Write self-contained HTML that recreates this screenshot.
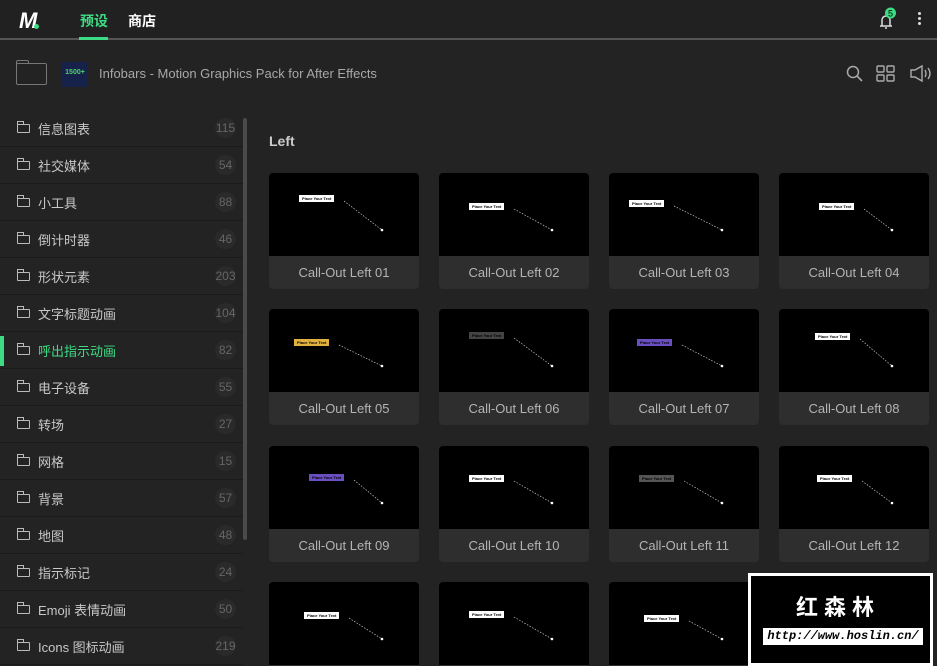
<!DOCTYPE html>
<html><head><meta charset="utf-8"><style>
*{margin:0;padding:0;box-sizing:border-box}
html,body{width:937px;height:666px;overflow:hidden}
body{background:#232323;font-family:"Liberation Sans","Noto Sans CJK SC",sans-serif;position:relative;color:#bbb}
.abs{position:absolute}
.top{left:0;top:0;width:937px;height:38px;background:#212121}
.line{left:0;top:38px;width:937px;height:2px;background:#555}
.hdr{left:0;top:40px;width:937px;height:69px;background:#232323}
.sb{left:0;top:110px;width:250px;height:556px;background:#232323}
.item{position:absolute;left:0;width:243px;height:37px;border-bottom:1px solid #1b1b1b;font-size:13px;color:#c8c8c8}
.item .t{position:absolute;left:38px;top:9px}
.item .f{position:absolute;left:17px;top:14px;width:13px;height:9px;border:1.5px solid #bbb;border-radius:1px}
.item .f:before{content:"";position:absolute;left:-1.5px;top:-4px;width:5px;height:3px;border:1.5px solid #bbb;border-bottom:none}
.item .n{position:absolute;right:7px;top:8px;min-width:21px;height:20px;border-radius:10px;background:#2a2a2a;color:#666;font-size:12px;text-align:center;line-height:20px}
.card{position:absolute;width:150px;height:116px;border-radius:4px;overflow:hidden;background:#2e2e2e}
.card .th{position:absolute;left:0;top:0;width:150px;height:83px;background:#000}
.card .cap{position:absolute;left:0;top:83px;width:150px;height:33px;text-align:center;line-height:33px;font-size:13px;color:#b4b4b4}
.lab{position:absolute;background:#fff;color:#000;font-size:4px;line-height:7px;height:7px;padding:0 3px;font-weight:bold}
</style></head><body>
<div class="abs top"></div>
<div class="abs line"></div>
<div class="abs" style="left:79px;top:37px;width:29px;height:3px;background:#3ddc84"></div>
<div class="abs" style="left:19px;top:8px;font:bold 22px 'Liberation Sans';color:#fff;font-style:italic">M</div>
<div class="abs" style="left:34px;top:24px;width:5px;height:5px;border-radius:50%;background:#3ddc84"></div>
<div class="abs" style="left:80px;top:11px;font-size:14px;font-weight:bold;color:#3ddc84">预设</div>
<div class="abs" style="left:128px;top:11px;font-size:14px;font-weight:bold;color:#fff">商店</div>
<svg class="abs" style="left:876px;top:7px" width="22" height="22"><path d="M4 19h12M6 19v-6a4 4 0 0 1 8 0v6M9 21h2" stroke="#ddd" stroke-width="1.5" fill="none"/><circle cx="14.5" cy="6" r="5.5" fill="#3ddc84"/><text x="14.5" y="9.5" font-size="9" fill="#000" text-anchor="middle" font-family="Liberation Sans">5</text></svg>
<div class="abs" style="left:918px;top:12px;width:3px;height:3px;background:#ddd;box-shadow:0 5px #ddd,0 10px #ddd;border-radius:50%"></div>
<div class="abs hdr"></div>
<div class="abs" style="left:16px;top:63px;width:31px;height:22px;border:1.5px solid #777;border-radius:2px"></div>
<div class="abs" style="left:16px;top:60px;width:13px;height:4px;border:1.5px solid #777;border-bottom:none;border-radius:2px 2px 0 0"></div>
<div class="abs" style="left:62px;top:62px;width:26px;height:25px;background:#16224a;color:#4fd36b;font-size:7px;font-weight:bold;text-align:center;line-height:22px">1500+</div>
<div class="abs" style="left:99px;top:66px;font-size:13px;color:#a8a8a8">Infobars - Motion Graphics Pack for After Effects</div>
<svg class="abs" style="left:845px;top:64px" width="90" height="20"><circle cx="8" cy="8" r="5.5" stroke="#aaa" stroke-width="1.5" fill="none"/><path d="M12 12l5 5" stroke="#aaa" stroke-width="1.6"/><rect x="32" y="2" width="7" height="6" rx="1" stroke="#aaa" fill="none" stroke-width="1.4"/><rect x="42" y="2" width="7" height="6" rx="1" stroke="#aaa" fill="none" stroke-width="1.4"/><rect x="32" y="11" width="7" height="6" rx="1" stroke="#aaa" fill="none" stroke-width="1.4"/><rect x="42" y="11" width="7" height="6" rx="1" stroke="#aaa" fill="none" stroke-width="1.4"/><path d="M66 6h4l7-4v15l-7-4h-4z M80 6q2 3.5 0 7 M83 4q4 5.5 0 11" stroke="#aaa" stroke-width="1.4" fill="none"/></svg>
<div class="abs sb">
<div class="item" style="top:0"><span class="f"></span><span class="t">信息图表</span><span class="n">115</span></div>
<div class="item" style="top:37px"><span class="f"></span><span class="t">社交媒体</span><span class="n">54</span></div>
<div class="item" style="top:74px"><span class="f"></span><span class="t">小工具</span><span class="n">88</span></div>
<div class="item" style="top:111px"><span class="f"></span><span class="t">倒计时器</span><span class="n">46</span></div>
<div class="item" style="top:148px"><span class="f"></span><span class="t">形状元素</span><span class="n">203</span></div>
<div class="item" style="top:185px"><span class="f"></span><span class="t">文字标题动画</span><span class="n">104</span></div>
<div class="item" style="top:222px"><div style="position:absolute;left:0;top:4px;width:4px;height:30px;background:#3ddc84"></div><span class="f"></span><span class="t" style="color:#3ddc84">呼出指示动画</span><span class="n">82</span></div>
<div class="item" style="top:259px"><span class="f"></span><span class="t">电子设备</span><span class="n">55</span></div>
<div class="item" style="top:296px"><span class="f"></span><span class="t">转场</span><span class="n">27</span></div>
<div class="item" style="top:333px"><span class="f"></span><span class="t">网格</span><span class="n">15</span></div>
<div class="item" style="top:370px"><span class="f"></span><span class="t">背景</span><span class="n">57</span></div>
<div class="item" style="top:407px"><span class="f"></span><span class="t">地图</span><span class="n">48</span></div>
<div class="item" style="top:444px"><span class="f"></span><span class="t">指示标记</span><span class="n">24</span></div>
<div class="item" style="top:481px"><span class="f"></span><span class="t">Emoji 表情动画</span><span class="n">50</span></div>
<div class="item" style="top:518px"><span class="f"></span><span class="t">Icons 图标动画</span><span class="n">219</span></div>
<div style="position:absolute;left:243px;top:8px;width:4px;height:422px;background:#4a4a4a;border-radius:2px"></div>
</div>
<div class="abs" style="left:269px;top:133px;font-size:14px;font-weight:bold;color:#ccc">Left</div>
<div id="g"></div>
<script>
var xs=[269,439,609,779],ys=[173,309,446,582],h='';
var lx=[[30,30,20,40],[25,30,28,36],[40,30,30,38],[35,30,35,38]];
var ly=[[22,30,27,30],[30,23,30,24],[28,29,29,29],[30,29,33,30]];
var col=[['#fff','#fff','#fff','#fff'],['#e0b040','#444','#6a4fc0','#fff'],['#6a4fc0','#fff','#555','#fff'],['#fff','#fff','#fff','#fff']];
for(var r=0;r<4;r++)for(var c=0;c<4;c++){
var n=r*4+c+1,x=lx[r][c],y=ly[r][c];
h+='<div class="card" style="left:'+xs[c]+'px;top:'+ys[r]+'px"><div class="th"><div class="lab" style="left:'+x+'px;top:'+y+'px;background:'+col[r][c]+'">Place Your Text</div><svg style="position:absolute;left:0;top:0" width="150" height="83"><path d="M'+(x+45)+' '+(y+6)+'L113 57" stroke="#ccc" stroke-width="0.7" stroke-dasharray="1.5 1.5"/><circle cx="113" cy="57" r="1.3" fill="#fff"/></svg></div><div class="cap">Call-Out Left '+(n<10?'0'+n:n)+'</div></div>';}
document.getElementById('g').innerHTML=h;
</script>
<div class="abs" style="left:748px;top:573px;width:185px;height:93px;border:3px solid #fff;background:#000"></div>
<div class="abs" style="left:796px;top:590px;font-size:22px;font-weight:bold;color:#fff;letter-spacing:6px">红森林</div>
<div class="abs" style="left:763px;top:628px;width:160px;height:17px;background:#fff;color:#000;font:bold italic 12px 'Liberation Mono',monospace;text-align:center;line-height:17px">http://www.hoslin.cn/</div>
</body></html>
